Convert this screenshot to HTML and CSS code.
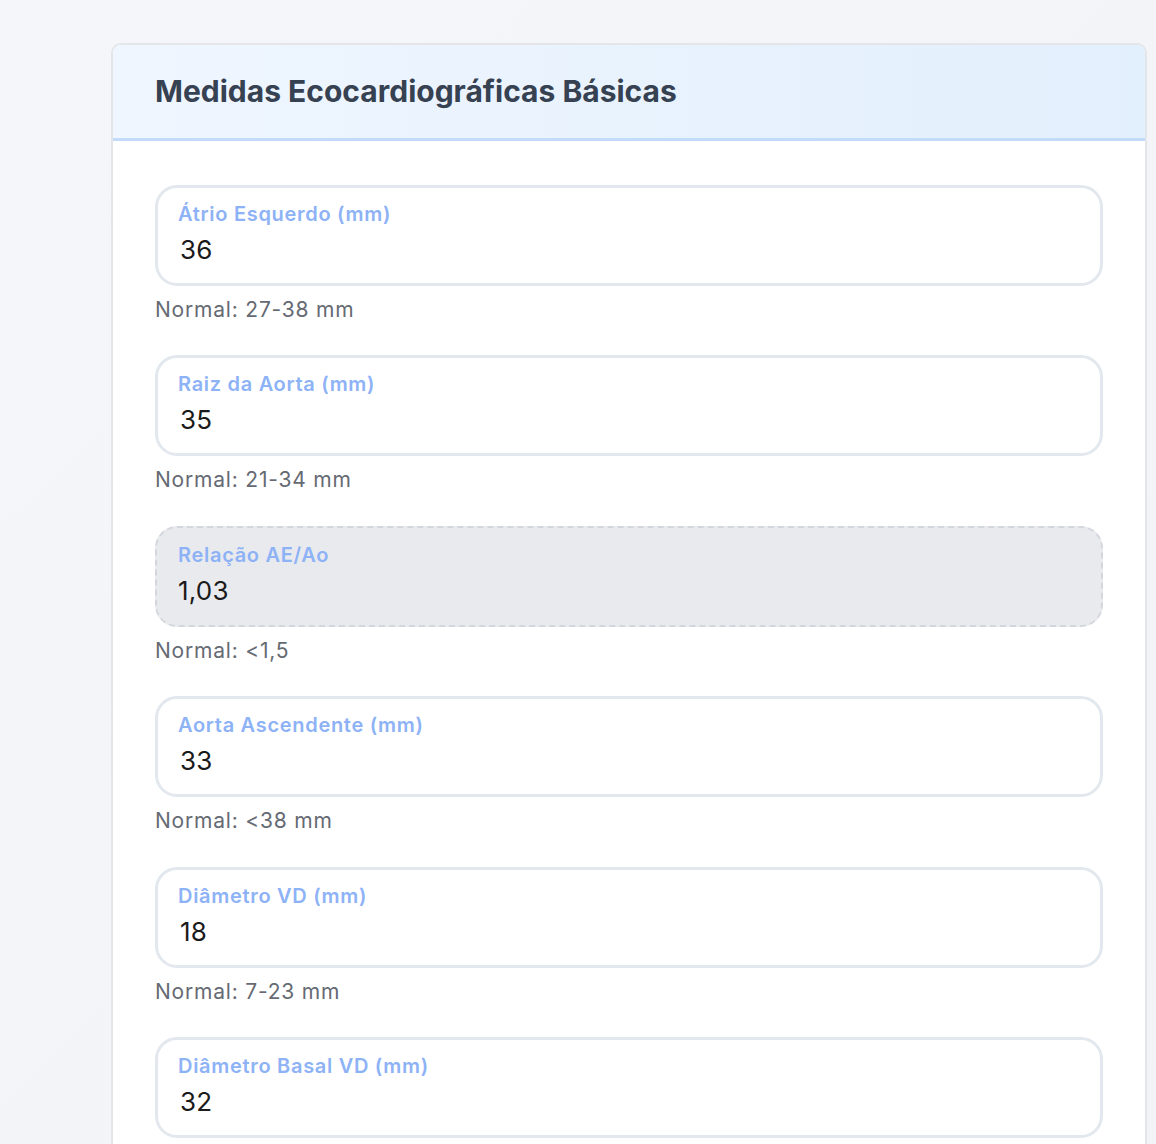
FILE: index.html
```html
<!DOCTYPE html>
<html lang="pt">
<head>
<meta charset="utf-8">
<title>Medidas Ecocardiográficas Básicas</title>
<link rel="stylesheet" href="styles.css">
</head>
<body>
<main class="page">
  <section class="card">
    <header class="card-header">
      <h2 class="card-title">Medidas Ecocardiográficas Básicas</h2>
    </header>
    <div class="card-body">
      <div class="field">
        <label class="box">
          <span class="box-label">Átrio Esquerdo (mm)</span>
          <input class="box-input" type="text" value="36">
        </label>
        <p class="hint">Normal: 27-38 mm</p>
      </div>
      <div class="field">
        <label class="box">
          <span class="box-label">Raiz da Aorta (mm)</span>
          <input class="box-input" type="text" value="35">
        </label>
        <p class="hint">Normal: 21-34 mm</p>
      </div>
      <div class="field">
        <div class="box box-computed">
          <span class="box-label">Relação AE/Ao</span>
          <span class="box-value">1,03</span>
        </div>
        <p class="hint">Normal: &lt;1,5</p>
      </div>
      <div class="field">
        <label class="box">
          <span class="box-label">Aorta Ascendente (mm)</span>
          <input class="box-input" type="text" value="33">
        </label>
        <p class="hint">Normal: &lt;38 mm</p>
      </div>
      <div class="field">
        <label class="box">
          <span class="box-label">Diâmetro VD (mm)</span>
          <input class="box-input" type="text" value="18">
        </label>
        <p class="hint">Normal: 7-23 mm</p>
      </div>
      <div class="field">
        <label class="box">
          <span class="box-label">Diâmetro Basal VD (mm)</span>
          <input class="box-input" type="text" value="32">
        </label>
      </div>
    </div>
  </section>
</main>
</body>
</html>
```

FILE: styles.css
```css
* { box-sizing: border-box; }

html, body {
  margin: 0;
  padding: 0;
}

body {
  background: linear-gradient(135deg, #f5f6f9 0%, #f1f3f6 100%);
  font-family: Inter, "Noto Sans", "Liberation Sans", sans-serif;
  min-height: 100vh;
}

.page {
  padding: 43px 9px 0 111px;
}

.card {
  background: #ffffff;
  border: 2px solid #e3e5e9;
  border-bottom: none;
  border-radius: 10px 10px 0 0;
  overflow: hidden;
}

.card-header {
  background: linear-gradient(90deg, #eff6ff 0%, #e2effc 100%);
  border-bottom: 3px solid #c3dbfa;
  padding: 28px 42px 29px;
}

.card-title {
  margin: 0;
  font-size: 30px;
  line-height: 36px;
  font-weight: 700;
  color: #364152;
  letter-spacing: 0;
}

.card-body {
  padding: 44px 42px 0;
}

.field {
  margin-bottom: 33.4px;
}

.box {
  display: flex;
  flex-direction: column;
  gap: 8px;
  border: 3px solid #e3e8ef;
  border-radius: 22px;
  padding: 14px 20px 17px;
  background: #ffffff;
}

.box-label {
  font-size: 20px;
  line-height: 24px;
  font-weight: 600;
  color: #8db2f6;
  letter-spacing: 0.7px;
}

.box-input {
  border: none;
  outline: none;
  padding: 0 0 0 2px;
  margin: 0;
  font: inherit;
  font-size: 26px;
  line-height: 32px;
  height: 32px;
  color: #1a1a1a;
  background: transparent;
  width: 100%;
  letter-spacing: 0.2px;
}

.box-computed {
  background: #e9eaee;
  border: 2px dashed #d3d6dc;
  padding: 15px 21px 18px;
}

.box-value {
  font-size: 26px;
  line-height: 32px;
  color: #1a1a1a;
  letter-spacing: 0.2px;
}

.hint {
  margin: 12px 0 0;
  font-size: 21px;
  line-height: 24px;
  color: #656a73;
  letter-spacing: 0.8px;
}
```
